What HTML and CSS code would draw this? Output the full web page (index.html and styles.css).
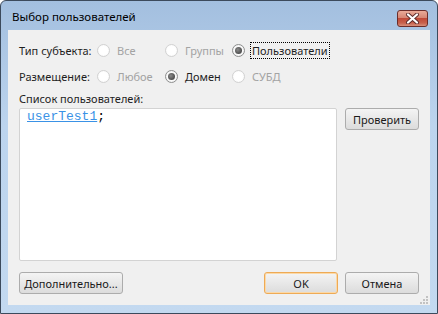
FILE: index.html
```html
<!DOCTYPE html>
<html lang="ru">
<head>
    <meta charset="UTF-8">
    <title>Выбор пользователей</title>
    <link rel="stylesheet" href="styles.css">
</head>
<body>
    <div class="window">
        <div class="titlebar">
            <span class="title">Выбор пользователей</span>
            <button class="close" type="button">
                <svg width="15" height="11" viewBox="0 0 15 11">
                    <path d="M3 1.5 L12 9.5 M12 1.5 L3 9.5" stroke="#5a2a2a" stroke-width="4" stroke-linecap="round"/>
                    <path d="M3 1.5 L12 9.5 M12 1.5 L3 9.5" stroke="#ffffff" stroke-width="2.2" stroke-linecap="round"/>
                </svg>
            </button>
        </div>
        <div class="client">
            <div class="option-row">
                <span class="row-label">Тип субъекта:</span>
                <label class="opt disabled"><input type="radio" name="kind" disabled><span>Все</span></label>
                <label class="opt disabled"><input type="radio" name="kind" disabled><span>Группы</span></label>
                <label class="opt"><input type="radio" name="kind" checked><span class="focused">Пользователи</span></label>
            </div>
            <div class="option-row">
                <span class="row-label">Размещение:</span>
                <label class="opt disabled"><input type="radio" name="place" disabled><span>Любое</span></label>
                <label class="opt"><input type="radio" name="place" checked><span>Домен</span></label>
                <label class="opt disabled"><input type="radio" name="place" disabled><span>СУБД</span></label>
            </div>
            <div class="list-area">
                <div class="list-col">
                    <div class="list-label">Список пользователей:</div>
                    <div class="user-box"><span class="user">userTest1</span>;</div>
                </div>
                <button class="btn" type="button">Проверить</button>
            </div>
            <div class="footer">
                <button class="btn wide" type="button">Дополнительно...</button>
                <div class="footer-right">
                    <button class="btn default" type="button">OK</button>
                    <button class="btn" type="button">Отмена</button>
                </div>
            </div>
            <svg class="grip" width="9" height="9" viewBox="0 0 9 9">
                <rect x="7" y="1" width="2" height="2" fill="#c2c2c2"/>
                <rect x="4" y="4" width="2" height="2" fill="#c2c2c2"/>
                <rect x="7" y="4" width="2" height="2" fill="#c2c2c2"/>
                <rect x="1" y="7" width="2" height="2" fill="#c2c2c2"/>
                <rect x="4" y="7" width="2" height="2" fill="#c2c2c2"/>
                <rect x="7" y="7" width="2" height="2" fill="#c2c2c2"/>
            </svg>
        </div>
    </div>
</body>
</html>
```

FILE: styles.css
```css
body {
    margin: 0;
    background-color: #ffffff;
    font-family: "Noto Sans", "Open Sans", sans-serif;
    font-size: 11px;
    color: #1e1e1e;
}
.window {
    width: 438px;
    height: 314px;
    box-sizing: border-box;
    border: 1px solid #3c4a5c;
    border-radius: 6px 6px 0 0;
    background: linear-gradient(#a3bfdf, #bcd4ee 40%, #c3d9f0);
    display: flex;
    flex-direction: column;
}
.titlebar {
    height: 29px;
    display: flex;
    align-items: flex-start;
    justify-content: space-between;
    padding: 0 9px 0 11px;
}
.title {
    margin-top: 8px;
    font-size: 11.5px;
    color: #000000;
}
.close {
    margin-top: 9px;
    width: 31px;
    height: 17px;
    padding: 0;
    border: 1px solid #6b2d2a;
    border-radius: 3px;
    background: linear-gradient(#e9aa98, #d68674 45%, #c04a38 50%, #c7614d 80%, #d8907c);
    display: flex;
    align-items: center;
    justify-content: center;
}
.client {
    flex: 1;
    margin: 0 7px 8px 7px;
    background-color: #f0f0f0;
    padding: 10px 11px 0 11px;
    position: relative;
}
.option-row {
    display: grid;
    grid-template-columns: 78px 68px 67px auto;
    align-items: center;
    height: 20px;
    margin-bottom: 5px;
    white-space: nowrap;
}
.option-row:first-child {
    margin-bottom: 6px;
}
.opt {
    display: flex;
    align-items: center;
    gap: 7px;
}
.opt.disabled {
    color: #a3a3a3;
}
.opt input {
    appearance: none;
    -webkit-appearance: none;
    margin: 0;
    width: 13px;
    height: 13px;
    border-radius: 50%;
    border: 1px solid #8e8f8f;
    background: radial-gradient(circle, #ffffff 40%, #e6e6e6);
    box-sizing: border-box;
    position: relative;
}
.opt input:disabled {
    border-color: #d2d2d2;
    background: radial-gradient(circle, #ffffff 50%, #f3f3f3);
}
.opt input:checked::after {
    content: "";
    position: absolute;
    left: 2px;
    top: 2px;
    width: 7px;
    height: 7px;
    border-radius: 50%;
    background: radial-gradient(circle at 40% 40%, #8a8a8a, #4d4d4d 70%, #6a6a6a);
}
.focused {
    outline: 1px dotted #000000;
    padding: 0 1px;
    margin-left: -1px;
    line-height: 15px;
}
.list-area {
    display: flex;
    gap: 8px;
}
.list-col {
    width: 318px;
}
.list-label {
    line-height: 16px;
    margin-bottom: 1px;
}
.user-box {
    height: 153px;
    box-sizing: border-box;
    border: 1px solid #d3d3d3;
    border-radius: 2px;
    background-color: #ffffff;
    padding: 0 7px;
    font-family: "Liberation Mono", "Courier New", monospace;
    font-size: 13px;
    line-height: 16px;
    color: #000000;
}
.user {
    color: #3a92e6;
    text-decoration: underline;
}
.btn {
    width: 74px;
    height: 22px;
    padding: 0;
    border: 1px solid #acacac;
    border-radius: 3px;
    background: linear-gradient(#f4f4f4, #e8e8e8 50%, #dcdcdc);
    font-family: "Noto Sans", "Open Sans", sans-serif;
    font-size: 11px;
    color: #1a1a1a;
    margin-top: 17px;
}
.btn.wide {
    width: 104px;
}
.btn.default {
    border-color: #eeaa55;
    box-shadow: inset 0 0 0 1px #fbd9a8;
}
.footer {
    display: flex;
    justify-content: space-between;
    margin-top: -6px;
}
.footer-right {
    display: flex;
    gap: 7px;
}
.grip {
    position: absolute;
    right: 2px;
    bottom: 1px;
}
```
